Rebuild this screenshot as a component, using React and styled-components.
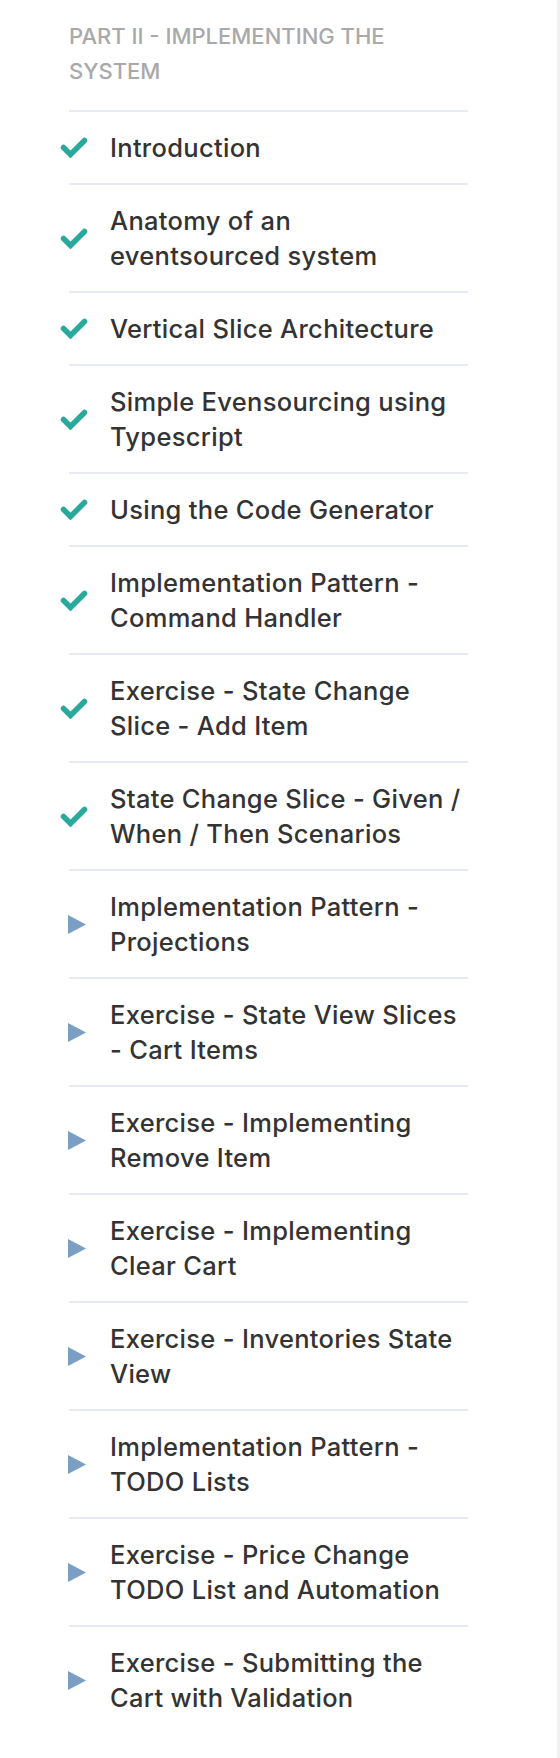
import React from 'react';
import styled, { createGlobalStyle } from 'styled-components';

const GlobalStyle = createGlobalStyle`
  html, body {
    margin: 0;
    padding: 0;
    background: #ffffff;
  }
  body {
    font-family: Inter, "Open Sans", sans-serif;
  }
`;

const Sidebar = styled.div`
  width: 557px;
  min-height: 1758px;
  border-right: 3px solid #f1f1f3;
  background: #ffffff;
`;

const Section = styled.div`
  width: 399px;
  margin-left: 69px;
  padding-top: 19px;
`;

const SectionTitle = styled.div`
  color: #a9a9a9;
  font-size: 22px;
  font-weight: 500;
  line-height: 35px;
  text-transform: uppercase;
  margin-bottom: 21px;
`;

const LessonList = styled.ul`
  list-style: none;
  margin: 0;
  padding: 0;
`;

const Lesson = styled.li`
  display: flex;
  align-items: center;
  border-top: 2px solid #e8ebf7;
  padding: 18px 0;
`;

const IconSlot = styled.span`
  display: flex;
  align-items: center;
  flex: 0 0 30px;
  margin-left: -9px;
  margin-right: 20px;
  padding-left: ${(p) => (p.$done ? '0' : '8px')};
  box-sizing: border-box;
`;

const LessonTitle = styled.span`
  flex: 1;
  color: #333333;
  font-size: 25.5px;
  font-weight: 500;
  letter-spacing: 0.3px;
  line-height: 35px;
`;

const CheckIcon = () => (
  <svg width="28" height="21" viewBox="0 0 28 21">
    <path
      d="M3.5 10.5 L10.5 17.5 L24.5 3.5"
      fill="none"
      stroke="#28a99c"
      strokeWidth="5.5"
      strokeLinecap="round"
      strokeLinejoin="miter"
    />
  </svg>
);

const PlayIcon = () => (
  <svg width="18" height="19" viewBox="0 0 18 19">
    <path d="M0 0 L18 9.5 L0 19 Z" fill="#7a9ec4" />
  </svg>
);

const lessons = [
  { title: 'Introduction', done: true },
  { title: 'Anatomy of an eventsourced system', done: true },
  { title: 'Vertical Slice Architecture', done: true },
  { title: 'Simple Evensourcing using Typescript', done: true },
  { title: 'Using the Code Generator', done: true },
  { title: 'Implementation Pattern - Command Handler', done: true },
  { title: 'Exercise - State Change Slice - Add Item', done: true },
  { title: 'State Change Slice - Given / When / Then Scenarios', done: true },
  { title: 'Implementation Pattern - Projections', done: false },
  { title: 'Exercise - State View Slices - Cart Items', done: false },
  { title: 'Exercise - Implementing Remove Item', done: false },
  { title: 'Exercise - Implementing Clear Cart', done: false },
  { title: 'Exercise - Inventories State View', done: false },
  { title: 'Implementation Pattern - TODO Lists', done: false },
  { title: 'Exercise - Price Change TODO List and Automation', done: false },
  { title: 'Exercise - Submitting the Cart with Validation', done: false },
];

export default function App() {
  return (
    <>
      <GlobalStyle />
      <Sidebar>
        <Section>
          <SectionTitle>Part II - Implementing the System</SectionTitle>
          <LessonList>
            {lessons.map((l) => (
              <Lesson key={l.title}>
                <IconSlot $done={l.done}>{l.done ? <CheckIcon /> : <PlayIcon />}</IconSlot>
                <LessonTitle>{l.title}</LessonTitle>
              </Lesson>
            ))}
          </LessonList>
        </Section>
      </Sidebar>
    </>
  );
}
